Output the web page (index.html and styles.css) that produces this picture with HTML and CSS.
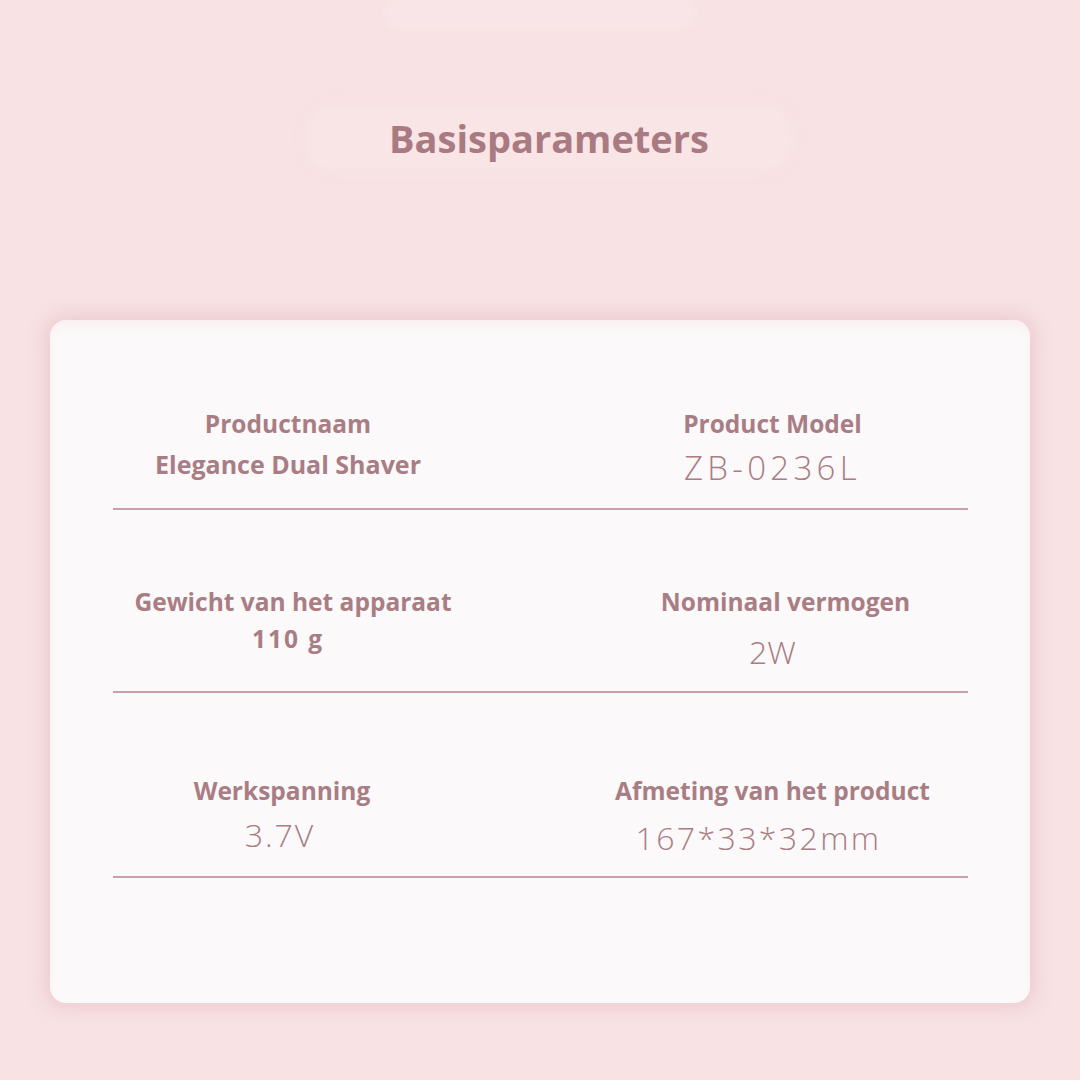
FILE: index.html
```html
<!DOCTYPE html>
<html lang="nl">
<head>
<meta charset="utf-8">
<title>Basisparameters</title>
<link rel="stylesheet" href="styles.css">
</head>
<body>
<div class="page">
  <div class="top-glow"></div>
  <h1 class="title"><span class="title-text">Basisparameters</span></h1>
  <section class="card">
    <div class="row row-1">
      <div class="cell">
        <div class="label">Productnaam</div>
        <div class="value value-bold mt-8">Elegance Dual Shaver</div>
      </div>
      <div class="cell">
        <div class="label">Product Model</div>
        <div class="value value-light value-model">ZB-0236L</div>
      </div>
    </div>
    <div class="row row-2">
      <div class="cell">
        <div class="label shift-r10">Gewicht van het apparaat</div>
        <div class="value value-bold value-weight">110 g</div>
      </div>
      <div class="cell">
        <div class="label shift-r26">Nominaal vermogen</div>
        <div class="value value-light value-power">2W</div>
      </div>
    </div>
    <div class="row row-3">
      <div class="cell">
        <div class="label shift-l12">Werkspanning</div>
        <div class="value value-light value-voltage shift-l16">3.7V</div>
      </div>
      <div class="cell">
        <div class="label">Afmeting van het product</div>
        <div class="value value-light value-size shift-l28">167*33*32mm</div>
      </div>
    </div>
  </section>
</div>
</body>
</html>
```

FILE: styles.css
```css
html, body {
  margin: 0;
  padding: 0;
}
body {
  background: #f8e2e4;
  font-family: "Open Sans", "Noto Sans", sans-serif;
  color: #a97d84;
}
.page {
  width: 1080px;
  height: 1080px;
  overflow: hidden;
  padding-top: 114px;
  box-sizing: border-box;
  position: relative;
}
.top-glow {
  position: absolute;
  left: 385px;
  top: 0;
  width: 310px;
  height: 30px;
  border-radius: 0 0 16px 16px;
  background: #f9e5e7;
  filter: blur(4px);
}
.title {
  margin: 0;
  padding-left: 18px;
  text-align: center;
  font-size: 38px;
  line-height: 48px;
  font-weight: 700;
  color: #a97a82;
}
.title-text {
  padding: 4px 80px;
  border-radius: 24px;
  background: rgba(250, 230, 232, 0.6);
  box-shadow: 0 0 10px 6px rgba(250, 230, 232, 0.5);
}
.card {
  margin: 158px 50px 0 50px;
  height: 683px;
  background: #fbf9f9;
  border-radius: 16px;
  box-shadow: 0 0 18px 5px rgba(232, 198, 202, 0.8), inset 0 8px 12px -6px rgba(250, 232, 233, 0.9);
  box-sizing: border-box;
}
.row {
  display: grid;
  grid-template-columns: 350px 1fr;
  column-gap: 114px;
  margin: 0 62px 0 63px;
  border-bottom: 2px solid #c9a0a7;
  box-sizing: border-box;
}
.row-1 { height: 190px; padding-top: 88px; }
.row-2 { height: 183px; padding-top: 76px; }
.row-3 { height: 185px; padding-top: 82px; }
.cell {
  display: flex;
  flex-direction: column;
  align-items: center;
  text-align: center;
}
.label {
  font-size: 24.5px;
  line-height: 32px;
  font-weight: 700;
  white-space: nowrap;
}
.value {
  white-space: nowrap;
}
.value-bold {
  font-size: 25px;
  line-height: 32px;
  font-weight: 700;
}
.mt-8 { margin-top: 8px; }
.value-weight {
  margin-top: 5px;
  font-size: 24.5px;
  letter-spacing: 2px;
}
.value-light {
  font-weight: 350;
  font-size: 33px;
  line-height: 40px;
}
.value-model {
  margin-top: 8px;
  letter-spacing: 4.3px;
}
.value-power {
  margin-top: 14px;
  font-size: 32px;
}
.value-voltage {
  margin-top: 8px;
  font-size: 32px;
  letter-spacing: 2px;
}
.value-size {
  margin-top: 11px;
  font-size: 32px;
  letter-spacing: 2.4px;
}
.shift-r10 { padding-left: 10px; }
.shift-r26 { padding-left: 26px; }
.shift-l12 { padding-right: 12px; }
.shift-l16 { padding-right: 16px; }
.shift-l28 { padding-right: 28px; }
```
